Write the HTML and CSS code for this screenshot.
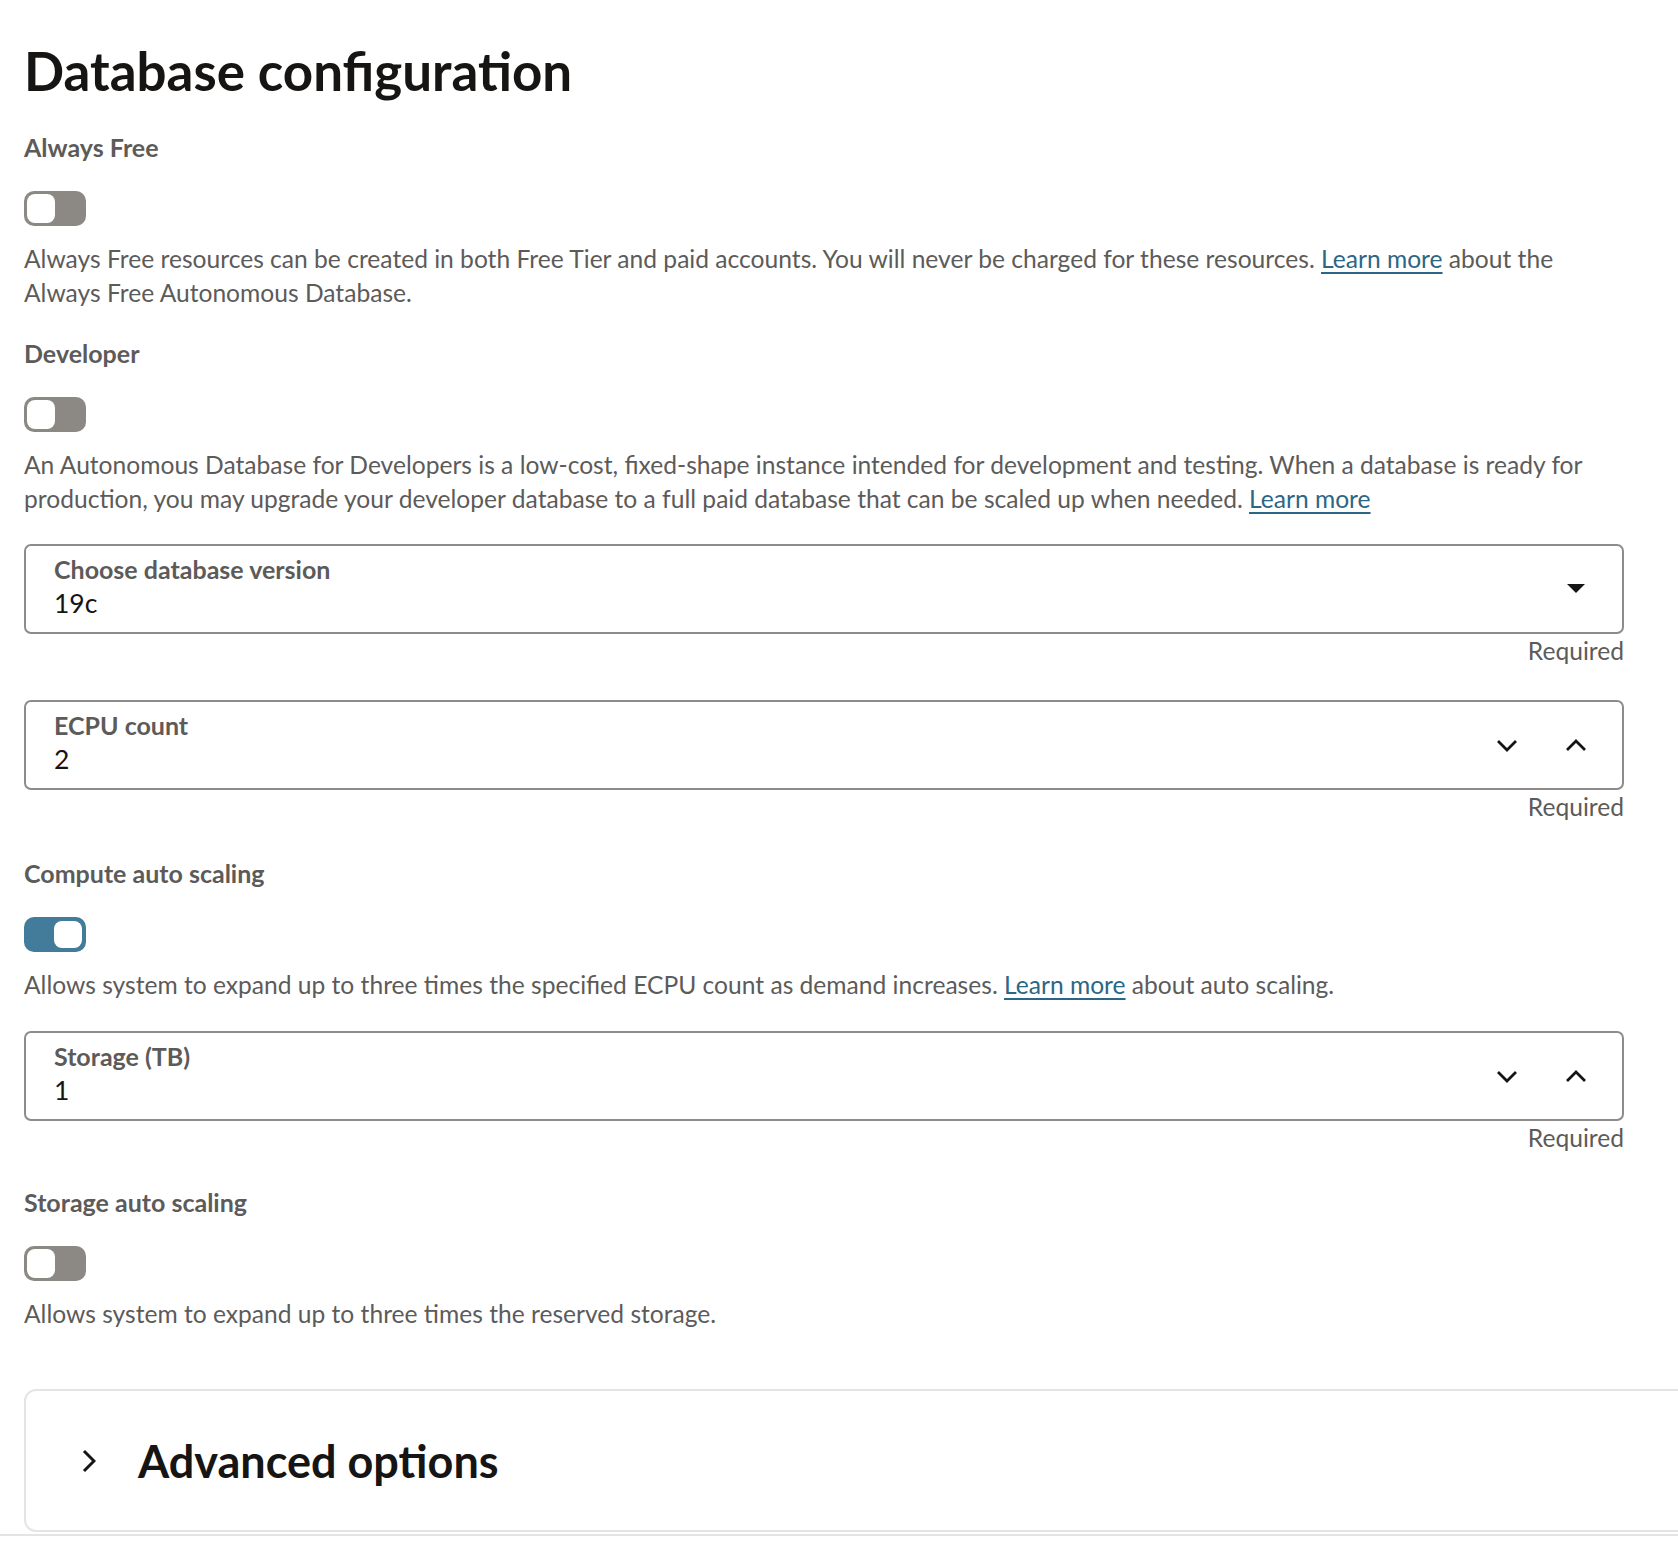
FILE: index.html
```html
<!DOCTYPE html>
<html lang="en">
<head>
<meta charset="utf-8">
<title>Database configuration</title>
<link rel="stylesheet" href="styles.css">
</head>
<body>
<main class="page">
  <h1 class="title">Database configuration</h1>

  <section class="switch-group">
    <div class="switch-label">Always Free</div>
    <div class="switch off"><span class="knob"></span></div>
    <p class="help">Always Free resources can be created in both Free Tier and paid accounts. You will never be charged for these resources. <a href="#" class="link">Learn more</a> about the Always Free Autonomous Database.</p>
  </section>

  <section class="switch-group">
    <div class="switch-label">Developer</div>
    <div class="switch off"><span class="knob"></span></div>
    <p class="help">An Autonomous Database for Developers is a low-cost, fixed-shape instance intended for development and testing. When a database is ready for production, you may upgrade your developer database to a full paid database that can be scaled up when needed. <a href="#" class="link">Learn more</a></p>
  </section>

  <div class="field-group first">
    <div class="field">
      <div class="field-text">
        <div class="field-label">Choose database version</div>
        <div class="field-value">19c</div>
      </div>
      <div class="field-icons">
        <span class="icon-btn">
          <svg width="18" height="10" viewBox="0 0 18 10"><polygon points="0,0 18,0 9,9" fill="#161513"/></svg>
        </span>
      </div>
    </div>
    <div class="required">Required</div>
  </div>

  <div class="field-group">
    <div class="field">
      <div class="field-text">
        <div class="field-label">ECPU count</div>
        <div class="field-value">2</div>
      </div>
      <div class="field-icons">
        <span class="icon-btn">
          <svg width="22" height="13" viewBox="0 0 22 13"><polyline points="2,2 11,11 20,2" fill="none" stroke="#161513" stroke-width="2.8" stroke-linejoin="miter"/></svg>
        </span>
        <span class="icon-btn">
          <svg width="22" height="13" viewBox="0 0 22 13"><polyline points="2,11 11,2 20,11" fill="none" stroke="#161513" stroke-width="2.8" stroke-linejoin="miter"/></svg>
        </span>
      </div>
    </div>
    <div class="required">Required</div>
  </div>

  <section class="switch-group after-field">
    <div class="switch-label">Compute auto scaling</div>
    <div class="switch on"><span class="knob"></span></div>
    <p class="help">Allows system to expand up to three times the specified ECPU count as demand increases. <a href="#" class="link">Learn more</a> about auto scaling.</p>
  </section>

  <div class="field-group storage">
    <div class="field">
      <div class="field-text">
        <div class="field-label">Storage (TB)</div>
        <div class="field-value">1</div>
      </div>
      <div class="field-icons">
        <span class="icon-btn">
          <svg width="22" height="13" viewBox="0 0 22 13"><polyline points="2,2 11,11 20,2" fill="none" stroke="#161513" stroke-width="2.8" stroke-linejoin="miter"/></svg>
        </span>
        <span class="icon-btn">
          <svg width="22" height="13" viewBox="0 0 22 13"><polyline points="2,11 11,2 20,11" fill="none" stroke="#161513" stroke-width="2.8" stroke-linejoin="miter"/></svg>
        </span>
      </div>
    </div>
    <div class="required">Required</div>
  </div>

  <section class="switch-group after-field last">
    <div class="switch-label">Storage auto scaling</div>
    <div class="switch off"><span class="knob"></span></div>
    <p class="help">Allows system to expand up to three times the reserved storage.</p>
  </section>

  <div class="adv-card">
    <span class="adv-chevron">
      <svg width="14" height="24" viewBox="0 0 14 24"><polyline points="2,2 12,12 2,22" fill="none" stroke="#161513" stroke-width="3"/></svg>
    </span>
    <h2 class="adv-title">Advanced options</h2>
  </div>
</main>
<div class="divider"></div>
</body>
</html>
```
FILE: styles.css
```css
html, body {
  margin: 0;
  padding: 0;
  background: #ffffff;
  overflow-x: hidden;
}

body {
  font-family: "Lato", "Open Sans", sans-serif;
  font-size: 24.6px;
  line-height: 34px;
  color: #5c5b5a;
}

.page {
  width: 1600px;
  padding: 39px 0 0 24px;
}

.title {
  margin: 0 0 27px;
  font-size: 52.9px;
  line-height: 64px;
  font-weight: 700;
  color: #161513;
}

.switch-group {
  display: flex;
  flex-direction: column;
  align-items: flex-start;
  margin-bottom: 26px;
}

.switch-group.after-field {
  margin-top: 28px;
}

.switch-group.after-field.last {
  margin-top: 30px;
}

.switch-label {
  font-size: 25px;
  font-weight: 700;
  line-height: 34px;
  color: #5c5b5a;
  margin-bottom: 27px;
}

.switch {
  box-sizing: border-box;
  width: 62px;
  height: 35px;
  border-radius: 10px;
  padding: 3px;
  display: flex;
  margin-bottom: 16px;
}

.switch.off {
  background: #8c8884;
  justify-content: flex-start;
}

.switch.on {
  background: #437b9a;
  justify-content: flex-end;
  padding: 4px;
}

.knob {
  width: 28px;
  height: 100%;
  background: #ffffff;
  border-radius: 8px;
}

.help {
  margin: 0;
  font-size: 24.6px;
  line-height: 34px;
  color: #5c5b5a;
}

.link {
  color: #2c6686;
  text-decoration: underline;
  text-decoration-thickness: 2px;
  text-underline-offset: 4px;
}

.field-group {
  margin-bottom: 32px;
}

.field-group.first {
  margin-top: 28px;
}

.field-group.storage {
  margin-top: 29px;
  margin-bottom: 0;
}

.field {
  box-sizing: border-box;
  height: 90px;
  border: 2px solid #8e8c8a;
  border-radius: 7px;
  display: flex;
  align-items: center;
  padding: 0 22px 0 28px;
}

.field-text {
  flex: 1;
  display: flex;
  flex-direction: column;
  margin-top: -6px;
}

.field-label {
  font-size: 25px;
  font-weight: 700;
  line-height: 34px;
  color: #5c5b5a;
}

.field-value {
  font-size: 26.5px;
  line-height: 34px;
  color: #161513;
}

.field-icons {
  display: flex;
  gap: 21px;
}

.icon-btn {
  width: 48px;
  height: 48px;
  display: flex;
  align-items: center;
  justify-content: center;
}

.required {
  text-align: right;
  font-size: 24.6px;
  line-height: 34px;
  color: #5c5b5a;
}

.adv-card {
  box-sizing: border-box;
  height: 143px;
  margin-top: 58px;
  margin-right: -200px;
  border: 2px solid #e4e4e4;
  border-radius: 12px;
  display: flex;
  align-items: center;
  padding-left: 56px;
}

.adv-chevron {
  width: 14px;
  height: 24px;
  display: flex;
  margin-right: 42px;
}

.adv-title {
  margin: 0;
  font-size: 45px;
  line-height: 54px;
  font-weight: 700;
  color: #161513;
}

.divider {
  margin-top: 2px;
  height: 2px;
  background: #e4e4e4;
}
```
